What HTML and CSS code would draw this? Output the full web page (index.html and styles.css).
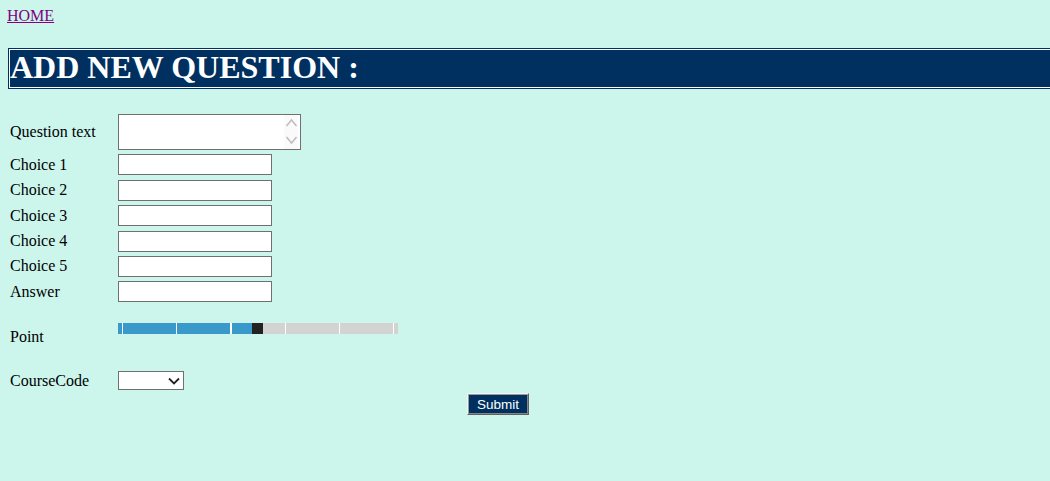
FILE: index.html
```html
<!DOCTYPE html>
<html>
<head>
<meta charset="utf-8">
<title>Add New Question</title>
<link rel="stylesheet" href="styles.css">
</head>
<body>
<div class="nav"><a href="#" class="home">HOME</a></div>
<div class="title"><h1>ADD NEW QUESTION :</h1></div>
<form class="qform">
  <label class="lbl">Question text</label>
  <div class="ctl">
    <div class="ta-wrap">
      <textarea class="ta"></textarea>
      <div class="ta-bar">
        <svg width="13" height="32" viewBox="0 0 13 32"><path d="M1.5 10 L6.5 4 L11.5 10" fill="none" stroke="#bdbdbd" stroke-width="1.5"/><path d="M1.5 21 L6.5 27 L11.5 21" fill="none" stroke="#bdbdbd" stroke-width="1.5"/></svg>
      </div>
    </div>
  </div>
  <label class="lbl">Choice 1</label><div class="ctl"><input class="txt" type="text"></div>
  <label class="lbl">Choice 2</label><div class="ctl"><input class="txt" type="text"></div>
  <label class="lbl">Choice 3</label><div class="ctl"><input class="txt" type="text"></div>
  <label class="lbl">Choice 4</label><div class="ctl"><input class="txt" type="text"></div>
  <label class="lbl">Choice 5</label><div class="ctl"><input class="txt" type="text"></div>
  <label class="lbl">Answer</label><div class="ctl"><input class="txt" type="text"></div>
  <label class="lbl">Point</label>
  <div class="ctl ctl-point">
    <div class="slider">
      <div class="fill"></div>
      <div class="thumb"></div>
      <div class="rest"></div>
      <div class="ticks"></div>
    </div>
  </div>
  <label class="lbl">CourseCode</label>
  <div class="ctl">
    <div class="sel-wrap">
      <select class="sel"><option></option></select>
      <svg class="sel-arrow" width="12" height="8" viewBox="0 0 12 8"><path d="M1 1.5 L6 6.5 L11 1.5" fill="none" stroke="#222" stroke-width="1.8"/></svg>
    </div>
  </div>
  <div class="submit-row"><button type="button" class="submit">Submit</button></div>
</form>
</body>
</html>
```
FILE: styles.css
```css
html, body {
  margin: 0;
  padding: 0;
  background: #ccf5ec;
  overflow: hidden;
}
body {
  font-family: "Liberation Serif", "Times New Roman", serif;
  font-size: 16px;
  color: #000;
  padding: 7px 0 0 0;
}
.nav {
  padding-left: 7px;
  line-height: 18px;
  height: 18px;
}
.home {
  color: #800080;
  text-decoration: underline;
}
.title {
  margin: 23px -40px 0 8px;
  border: 1px solid #003060;
  padding: 1px;
  background: #ffffff;
}
.title h1 {
  margin: 0;
  background: #003060;
  color: #ffffff;
  font-size: 32px;
  font-weight: bold;
  line-height: 34px;
  padding: 0 0 3px 0;
}
.qform {
  margin: 25px 0 0 8px;
  width: 980px;
  display: grid;
  grid-template-columns: 110px 1fr;
  row-gap: 4.4px;
  align-items: center;
}
.lbl {
  padding-left: 2px;
  line-height: 18px;
}
.ctl {
  display: flex;
  align-items: center;
}
.ta-wrap {
  display: flex;
  width: 181px;
  height: 34px;
  border: 1px solid #707070;
  background: #fff;
}
.ta {
  flex: 1;
  border: 0;
  margin: 0;
  padding: 0;
  resize: none;
  outline: none;
  background: #fff;
  overflow: hidden;
}
.ta-bar {
  width: 14px;
  margin-right: 2px;
  background: #fafafa;
  display: flex;
  align-items: center;
  justify-content: center;
}
.txt {
  box-sizing: border-box;
  width: 154px;
  height: 21px;
  margin: 0;
  padding: 0 2px;
  border: 1px solid #707070;
  background: #fff;
  outline: none;
}
.ctl-point {
  height: 60px;
  align-items: flex-start;
  padding-top: 16px;
  box-sizing: border-box;
}
.slider {
  position: relative;
  display: flex;
  width: 280px;
  height: 11px;
}
.fill {
  width: 134px;
  background: #3a99cb;
}
.thumb {
  width: 11px;
  background: #222222;
  position: relative;
  z-index: 2;
}
.rest {
  flex: 1;
  background: #d3d3d3;
}
.ticks {
  position: absolute;
  inset: 0;
  z-index: 1;
  background: repeating-linear-gradient(to right, transparent 0, transparent 4px, #ffffff 4px, #ffffff 5.2px, transparent 5.2px, transparent 54.2px);
}
.sel-wrap {
  position: relative;
  width: 66px;
  height: 19px;
}
.sel {
  appearance: none;
  -webkit-appearance: none;
  box-sizing: border-box;
  width: 66px;
  height: 19px;
  margin: 0;
  border: 1px solid #707070;
  border-radius: 0;
  background: #fff;
  outline: none;
}
.sel-arrow {
  position: absolute;
  right: 4px;
  top: 6px;
  pointer-events: none;
}
.submit-row {
  grid-column: 1 / 3;
  display: flex;
  justify-content: center;
  margin-top: -1.5px;
}
.submit {
  box-sizing: border-box;
  width: 62px;
  height: 22px;
  margin: 0;
  padding: 0;
  background: #003060;
  color: #fff;
  font-family: "Liberation Sans", Arial, sans-serif;
  font-size: 13.5px;
  border-style: solid;
  border-width: 1px;
  border-color: #f4f4f4 #606060 #606060 #f4f4f4;
  box-shadow: inset 1px 1px 0 #9a9a9a, inset -1px -1px 0 #858585;
  border-radius: 0;
}
```
